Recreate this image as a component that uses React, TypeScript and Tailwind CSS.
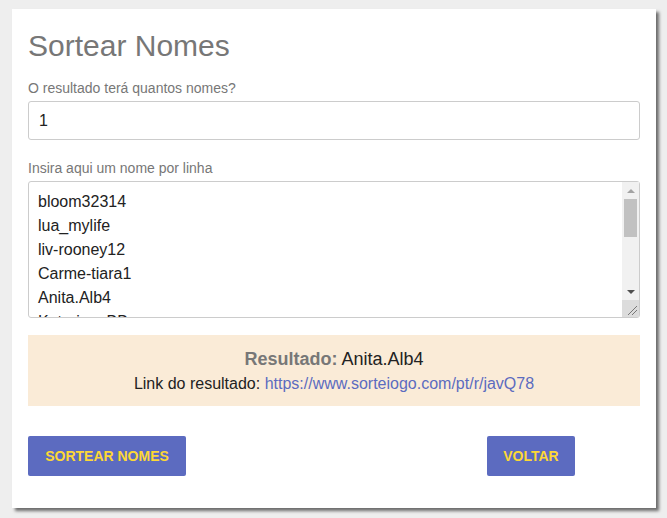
import { useState } from 'react';

const nomes = [
  'bloom32314',
  'lua_mylife',
  'liv-rooney12',
  'Carme-tiara1',
  'Anita.Alb4',
  'Katerina_BB',
  'joao.silva',
  'mari_99',
];

// fake classic scrollbar, the headless browser draws overlay ones
const Scrollbar = () => (
  <div className="absolute top-[1px] right-[1px] bottom-[1px] w-[17px] flex flex-col bg-[#f1f1f1]">
    <div className="h-[17px] flex items-center justify-center">
      <div className="w-0 h-0 border-l-[4px] border-r-[4px] border-b-[4px] border-l-transparent border-r-transparent border-b-[#a3a3a3]" />
    </div>
    <div className="flex-1 px-[2px]">
      <div className="h-[38px] bg-[#c1c1c1]" />
    </div>
    <div className="h-[17px] flex items-center justify-center">
      <div className="w-0 h-0 border-l-[4px] border-r-[4px] border-t-[4px] border-l-transparent border-r-transparent border-t-[#505050]" />
    </div>
    <div className="h-[17px] bg-[#dcdcdc] relative overflow-hidden">
      <svg width="17" height="17" viewBox="0 0 17 17" className="absolute inset-0">
        <path d="M6 15 L15 6 M10 15 L15 10" stroke="#777" strokeWidth="1" />
      </svg>
    </div>
  </div>
);

export default function App() {
  const [qtd, setQtd] = useState('1');
  const [lista, setLista] = useState(nomes.join('\n'));

  return (
    <div className="min-h-[518px] bg-[#eeeeee] pt-[9px] pl-[12px] pr-[11px] pb-[10px] font-['Liberation_Sans',Arial,sans-serif]">
      <div className="bg-white shadow-[3px_3px_3px_rgba(0,0,0,0.55)] px-[16px] pt-[19px] pb-[32px]">
        <h1 className="text-[30px] leading-[36px] text-[#777777]">Sortear Nomes</h1>

        <label className="block mt-[16px] text-[14px] leading-[16px] text-[#777777]">
          O resultado terá quantos nomes?
        </label>
        <input
          value={qtd}
          onChange={(e) => setQtd(e.target.value)}
          className="mt-[5px] block w-full h-[39px] border border-[#cccccc] rounded-[3px] px-[10px] text-[16px] text-[#222222] outline-none"
        />

        <label className="block mt-[20px] text-[14px] leading-[16px] text-[#777777]">
          Insira aqui um nome por linha
        </label>
        <div className="relative mt-[5px]">
          <textarea
            value={lista}
            onChange={(e) => setLista(e.target.value)}
            className="block w-full h-[137px] border border-[#cccccc] rounded-[3px] pl-[9px] pr-[26px] pt-[8px] text-[16px] leading-[24px] text-[#222222] overflow-hidden resize-none outline-none"
          />
          <Scrollbar />
        </div>

        <div className="mt-[17px] bg-[#faebd7] h-[71px] flex flex-col items-center justify-center gap-[5px]">
          <p className="text-[18px] leading-[20px] text-[#222222]">
            <b className="text-[#777777]">Resultado:</b> Anita.Alb4
          </p>
          <p className="text-[16px] leading-[19px] text-[#222222]">
            Link do resultado:{' '}
            <a href="#" className="text-[#5c6bc0]">https://www.sorteiogo.com/pt/r/javQ78</a>
          </p>
        </div>

        <div className="mt-[30px] grid grid-cols-4">
          <div className="col-span-3">
            <button className="h-[40px] w-[158px] bg-[#5c6bc0] rounded-[2px] text-[#fdd835] text-[14px] font-bold uppercase">
              Sortear Nomes
            </button>
          </div>
          <div>
            <button className="h-[40px] w-[88px] bg-[#5c6bc0] rounded-[2px] text-[#fdd835] text-[14px] font-bold uppercase">
              Voltar
            </button>
          </div>
        </div>
      </div>
    </div>
  );
}
